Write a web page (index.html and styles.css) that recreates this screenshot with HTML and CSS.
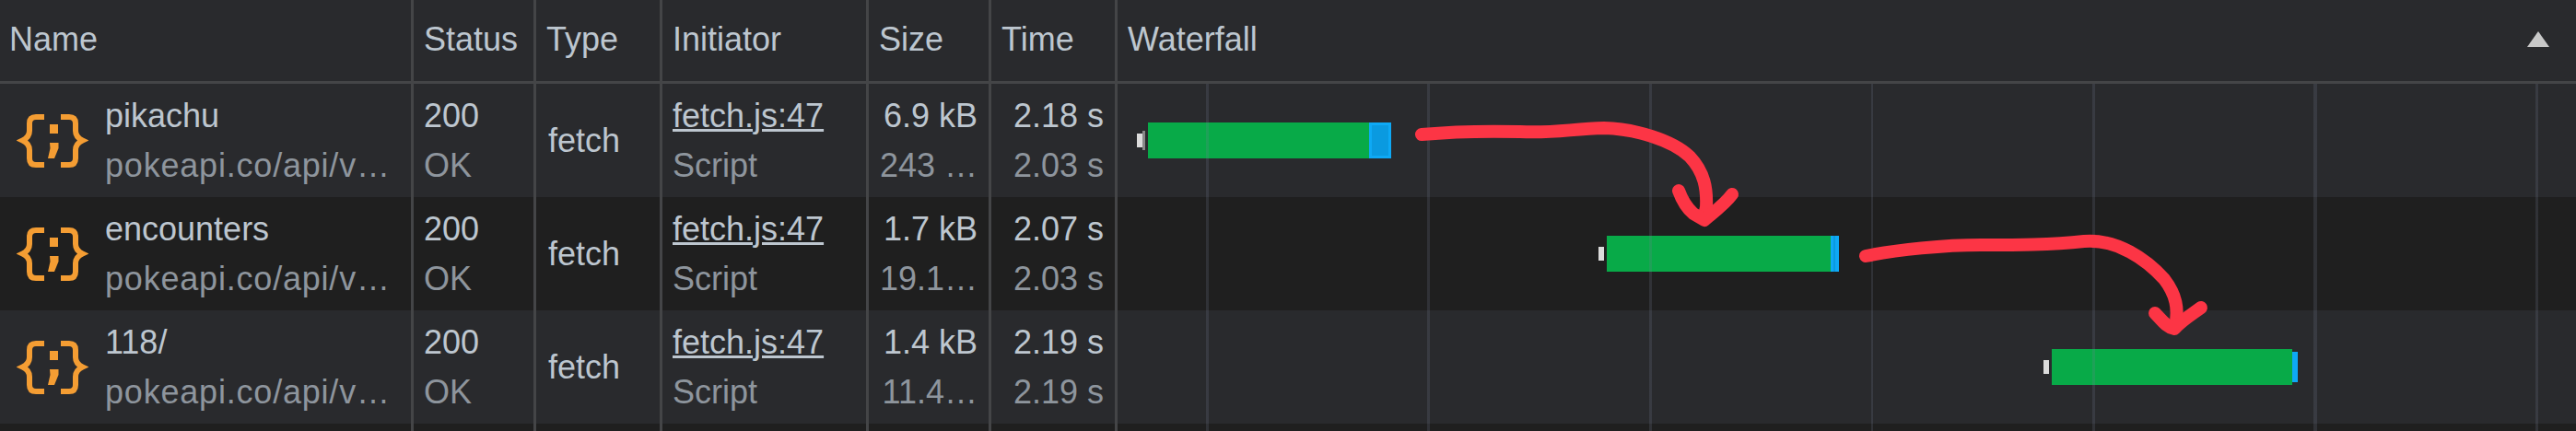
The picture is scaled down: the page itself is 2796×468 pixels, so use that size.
FILE: index.html
```html
<!DOCTYPE html>
<html lang="en">
<head>
  <meta charset="UTF-8" />
  <title>Network</title>
  <link rel="stylesheet" href="styles.css">
</head>
<body>
  <svg width="0" height="0" class="defs">
    <symbol id="script-icon" viewBox="0 0 78 58">
      <path class="brace" d="M30 3 H21 Q14 3 14 10 V18 Q14 25 6.500 28.5 Q14 32 14 39 V48 Q14 55 21 55 H30" />
      <path class="brace" d="M48 3 H57 Q64 3 64 10 V18 Q64 25 71.500 28.5 Q64 32 64 39 V48 Q64 55 57 55 H48" />
      <rect class="semi" x="36" y="11" width="9" height="10" />
      <path class="semi" d="M36 31 H45.5 V37 L41 48 H34 L36.500 37 Z" />
    </symbol>
  </svg>

  <div class="network">
    <div class="row head">
      <div class="cell name-head">Name</div>
      <div class="cell">Status</div>
      <div class="cell">Type</div>
      <div class="cell">Initiator</div>
      <div class="cell">Size</div>
      <div class="cell">Time</div>
      <div class="cell wf-head">Waterfall<span class="sort-arrow"></span></div>
    </div>

    <!-- Row 1 -->
    <div class="row">
      <div class="cell name">
        <svg class="icon"><use href="#script-icon" /></svg>
        <div class="stack">
          <span>pikachu</span>
          <span class="sub">pokeapi.co/api/v…</span>
        </div>
      </div>
      <div class="cell stack"><span>200</span><span class="sub">OK</span></div>
      <div class="cell type">fetch</div>
      <div class="cell stack"><a>fetch.js:47</a><span class="sub">Script</span></div>
      <div class="cell stack num"><span>6.9 kB</span><span class="sub">243 …</span></div>
      <div class="cell stack num"><span>2.18 s</span><span class="sub">2.03 s</span></div>
      <div class="cell waterfall">
        <div class="bar" style="left: 21px">
          <i class="stub"></i><i class="stub-end"></i>
          <i class="wait" style="width: 240px"></i>
          <i class="recv inner-wide" style="width: 24px"></i>
        </div>
      </div>
    </div>

    <!-- Row 2 -->
    <div class="row dark">
      <div class="cell name">
        <svg class="icon"><use href="#script-icon" /></svg>
        <div class="stack">
          <span>encounters</span>
          <span class="sub">pokeapi.co/api/v…</span>
        </div>
      </div>
      <div class="cell stack"><span>200</span><span class="sub">OK</span></div>
      <div class="cell type">fetch</div>
      <div class="cell stack"><a>fetch.js:47</a><span class="sub">Script</span></div>
      <div class="cell stack num"><span>1.7 kB</span><span class="sub">19.1…</span></div>
      <div class="cell stack num"><span>2.07 s</span><span class="sub">2.03 s</span></div>
      <div class="cell waterfall">
        <div class="bar" style="left: 522px">
          <i class="stub"></i><i class="stub-gap"></i>
          <i class="wait" style="width: 243px"></i>
          <i class="recv inner-thin" style="width: 9px"></i>
        </div>
      </div>
    </div>

    <!-- Row 3 -->
    <div class="row">
      <div class="cell name">
        <svg class="icon"><use href="#script-icon" /></svg>
        <div class="stack">
          <span>118/</span>
          <span class="sub">pokeapi.co/api/v…</span>
        </div>
      </div>
      <div class="cell stack"><span>200</span><span class="sub">OK</span></div>
      <div class="cell type">fetch</div>
      <div class="cell stack"><a>fetch.js:47</a><span class="sub">Script</span></div>
      <div class="cell stack num"><span>1.4 kB</span><span class="sub">11.4…</span></div>
      <div class="cell stack num"><span>2.19 s</span><span class="sub">2.19 s</span></div>
      <div class="cell waterfall">
        <div class="bar" style="left: 1005px">
          <i class="stub"></i><i class="stub-gap"></i>
          <i class="wait" style="width: 261px"></i>
          <i class="recv short" style="width: 6px"></i>
        </div>
      </div>
    </div>

    <!-- empty space under the last request -->
    <div class="row dark filler">
      <div class="cell"></div>
      <div class="cell"></div>
      <div class="cell"></div>
      <div class="cell"></div>
      <div class="cell"></div>
      <div class="cell"></div>
      <div class="cell waterfall"></div>
    </div>

    <!-- hand drawn arrows on top of the table -->
    <svg class="scribble" viewBox="0 0 2796 468">
      <path d="M1543 146 C1575 143 1610 142 1650 143 C1685 145 1705 140 1741 139 C1775 140 1815 152 1834 170 C1850 187 1853 205 1852 225 L1850 234" />
      <path d="M1822 207 C1826 218 1831 226 1838 232 L1850 239 C1858 232 1872 222 1880 211" />
      <path d="M2025 278 C2060 271 2110 266 2150 266 C2190 266 2225 266 2262 262 C2298 259 2330 282 2349 303 C2362 320 2365 335 2361 355" />
      <path d="M2339 340 C2346 347 2351 355 2360 357 C2368 348 2378 342 2389 334" />
    </svg>
  </div>
</body>
</html>
```

FILE: styles.css
```css
* { box-sizing: border-box; }
body {
  margin: 0;
  background: #1f1f1f;
  font-family: "Liberation Sans", Arial, sans-serif;
  font-size: 36px;
  color: #bdc6cf;
}
.defs { position: absolute; }
.network {
  position: relative;
  width: 2796px;
  height: 468px;
  overflow: hidden;
}
.row {
  display: grid;
  grid-template-columns: 449px 133px 137px 224px 133px 137px 1fr;
  height: 123px;
  background: #292a2d;
}
.row.dark { background: #1f1f1f; }
.row.head {
  height: 91px;
  border-bottom: 3px solid #444547;
}
.row.filler { height: 8px; }
.cell {
  padding: 0 11px;
  border-right: 3px solid #444547;
  white-space: nowrap;
}
.head .cell {
  display: flex;
  align-items: center;
  padding-bottom: 3px;
}
.head .name-head { padding-left: 10px; }
.cell:last-child { border-right: none; }
.stack {
  display: flex;
  flex-direction: column;
  justify-content: center;
  line-height: 54px;
}
.sub { color: #8e959d; }
a { text-decoration: underline; text-decoration-thickness: 3px; }
.num {
  align-items: flex-end;
  padding-right: 12px;
}
.type {
  display: flex;
  align-items: center;
  padding-left: 13px;
}
.name {
  display: flex;
  align-items: center;
  padding-left: 18px;
  padding-right: 0;
}
.name .sub { letter-spacing: 0.8px; }
.icon {
  width: 78px;
  height: 58px;
  margin-right: 18px;
  flex: none;
}
.brace {
  fill: none;
  stroke: #f49d33;
  stroke-width: 6;
  stroke-linejoin: miter;
}
.semi { fill: #f49d33; }

/* waterfall */
.waterfall {
  position: relative;
  padding: 0;
}
.waterfall::after {
  content: "";
  position: absolute;
  inset: 0;
  background: repeating-linear-gradient(to right,
    transparent 0, transparent 96px,
    rgba(118, 126, 150, 0.2) 96px, rgba(118, 126, 150, 0.2) 99px,
    transparent 99px, transparent 240.5px);
}
.wf-head { justify-content: space-between; padding-right: 29px !important; }
.sort-arrow {
  width: 24px;
  height: 17px;
  background: #c8c8c8;
  clip-path: polygon(50% 0, 100% 100%, 0 100%);
}
.bar {
  position: absolute;
  top: 42px;
  height: 39px;
  display: flex;
  align-items: center;
}
.bar i { display: block; flex: none; }
.stub { width: 6px; height: 15px; background: #dcdcdc; }
.stub-end { width: 3px; height: 21px; background: #888; }
.stub-gap { width: 3px; }
.stub-end + .wait { margin-left: 3px; }
.wait { height: 39px; background: #08aa48; }
.recv {
  height: 39px;
  background: #0ea9f5;
}
.recv.inner-wide { border: 3px solid #0ea9f5; background: #0a9ae0; }
.recv.inner-thin { background: linear-gradient(to right, #0ea9f5 3px, #0a9ae0 3px, #0a9ae0 5px, #0ea9f5 5px); }
.recv.short { height: 33px; }

.scribble {
  position: absolute;
  top: 0;
  left: 0;
  width: 2796px;
  height: 468px;
  fill: none;
  stroke: #fc3545;
  stroke-width: 14;
  stroke-linecap: round;
  stroke-linejoin: round;
}
```
